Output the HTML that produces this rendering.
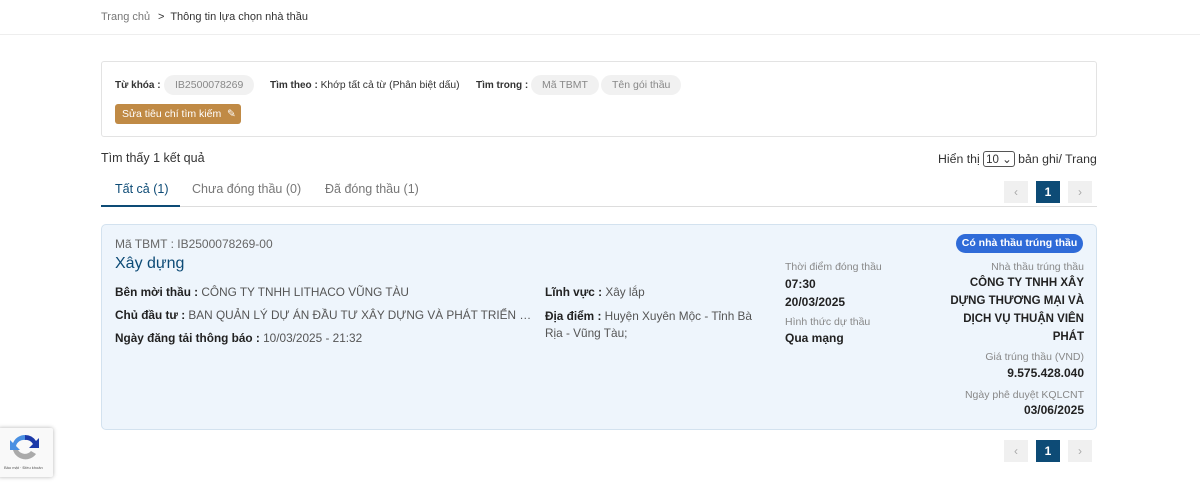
<!DOCTYPE html>
<html><head><meta charset="utf-8"><style>
*{box-sizing:border-box;margin:0;padding:0}
body{width:1200px;height:487px;background:#fff;font-family:"Liberation Sans",sans-serif;color:#222;position:relative;overflow:hidden}
.a{position:absolute;white-space:nowrap}
.bc{top:11px;font-size:11px;color:#777}
.hr{position:absolute;left:0;top:34px;width:1200px;height:1px;background:#eee}
.box{position:absolute;left:101px;top:61px;width:996px;height:76px;border:1px solid #e3e3e3;border-radius:3px}
.lab{font-size:10px;font-weight:bold;color:#333}
.pill{position:absolute;top:75px;height:20px;border-radius:10px;background:#f1f1f1;color:#888;font-size:10.5px;line-height:20px;padding:0 11px}
.btn{position:absolute;left:115px;top:104px;width:126px;height:20px;background:#c08a45;border-radius:3px;color:#fff;font-size:10.5px;line-height:20px;padding-left:7px}
.pg{position:absolute;width:24px;height:22px;background:#f0f0f0;color:#aaa;font-size:12px;text-align:center;line-height:22px}
.pg.on{background:#0d4b76;color:#fff;font-weight:bold}
.card{position:absolute;left:101px;top:224px;width:996px;height:206px;background:#eef5fc;border:1px solid #d3e2ef;border-radius:5px}
.f{font-size:11.8px;color:#555}
.f b{color:#222}
.g{font-size:10.5px;color:#888}
.v{font-size:12px;font-weight:bold;color:#222}
.r{right:116px;text-align:right}
</style></head><body>
<div class="a bc" style="left:101px">Trang chủ</div>
<div class="a bc" style="left:158px;color:#333">&gt;&nbsp; Thông tin lựa chọn nhà thầu</div>
<div class="hr"></div>
<div class="box"></div>
<div class="a lab" style="left:115px;top:80px">Từ khóa :</div>
<div class="pill" style="left:164px">IB2500078269</div>
<div class="a lab" style="left:270px;top:80px">Tìm theo : <span style="font-weight:normal;color:#333;font-size:10.3px">Khớp tất cả từ (Phân biệt dấu)</span></div>
<div class="a lab" style="left:476px;top:80px">Tìm trong :</div>
<div class="pill" style="left:531px">Mã TBMT</div>
<div class="pill" style="left:601px">Tên gói thầu</div>
<div class="btn">Sửa tiêu chí tìm kiếm &nbsp;✎</div>
<div class="a" style="left:101px;top:151px;font-size:12.5px;color:#333">Tìm thấy 1 kết quả</div>
<div class="a" style="left:938px;top:151px;font-size:12.3px;color:#333">Hiển thị <span style="display:inline-block;border:1px solid #555;border-radius:3px;padding:0 2px;font-size:11.5px">10 ⌄</span> bản ghi/ Trang</div>
<div class="a" style="left:115px;top:182px;font-size:12.5px;color:#0d4b76">Tất cả (1)</div>
<div class="a" style="left:192px;top:182px;font-size:12.5px;color:#777">Chưa đóng thầu (0)</div>
<div class="a" style="left:325px;top:182px;font-size:12.5px;color:#777">Đã đóng thầu (1)</div>
<div style="position:absolute;left:101px;top:206px;width:996px;height:1px;background:#ddd"></div>
<div style="position:absolute;left:101px;top:205px;width:79px;height:2px;background:#0d4b76"></div>
<div class="pg" style="left:1004px;top:181px">‹</div><div class="pg on" style="left:1036px;top:181px">1</div><div class="pg" style="left:1068px;top:181px">›</div>
<div class="card"></div>
<div class="a" style="left:115px;top:237px;font-size:12px;color:#666">Mã TBMT : IB2500078269-00</div>
<div class="a" style="left:115px;top:255px;font-size:16px;color:#0d4b76">Xây dựng</div>
<div class="a f" style="left:115px;top:285px"><b>Bên mời thầu :</b> CÔNG TY TNHH LITHACO VŨNG TÀU</div>
<div class="a f" style="left:115px;top:308px;width:424px;overflow:hidden;text-overflow:ellipsis"><b>Chủ đầu tư :</b> BAN QUẢN LÝ DỰ ÁN ĐẦU TƯ XÂY DỰNG VÀ PHÁT TRIỂN QUỸ ĐẤT</div>
<div class="a f" style="left:115px;top:331px"><b>Ngày đăng tải thông báo :</b> 10/03/2025 - 21:32</div>
<div class="a f" style="left:545px;top:285px"><b>Lĩnh vực :</b> Xây lắp</div>
<div class="a f" style="left:545px;top:308px;line-height:17px"><b>Địa điểm :</b> Huyện Xuyên Mộc - Tỉnh Bà<br>Rịa - Vũng Tàu;</div>
<div class="a g" style="left:785px;top:261px">Thời điểm đóng thầu</div>
<div class="a v" style="left:785px;top:275px;line-height:18px">07:30<br>20/03/2025</div>
<div class="a g" style="left:785px;top:316px">Hình thức dự thầu</div>
<div class="a v" style="left:785px;top:331px">Qua mạng</div>
<div class="a" style="left:956px;top:234px;width:127px;height:19px;border-radius:10px;background:#2f6bd8;color:#fff;font-size:10.5px;font-weight:bold;text-align:center;line-height:19px">Có nhà thầu trúng thầu</div>
<div class="a g r" style="top:261px">Nhà thầu trúng thầu</div>
<div class="a v r" style="top:274px;line-height:18px;font-size:11.5px">CÔNG TY TNHH XÂY<br>DỰNG THƯƠNG MẠI VÀ<br>DỊCH VỤ THUẬN VIÊN<br>PHÁT</div>
<div class="a g r" style="top:351px">Giá trúng thầu (VND)</div>
<div class="a v r" style="top:366px">9.575.428.040</div>
<div class="a g r" style="top:389px">Ngày phê duyệt KQLCNT</div>
<div class="a v r" style="top:403px">03/06/2025</div>
<div class="pg" style="left:1004px;top:440px">‹</div><div class="pg on" style="left:1036px;top:440px">1</div><div class="pg" style="left:1068px;top:440px">›</div>
<div style="position:absolute;left:-2px;top:428px;width:55px;height:49px;background:#f9f9f9;box-shadow:0 0 4px rgba(0,0,0,.3);border-radius:2px">
<svg width="34" height="34" viewBox="0 0 34 34" style="position:absolute;left:10px;top:3px">
<path d="M17 4a13 13 0 0 1 11 6l3-3v10h-10l4-4a8 8 0 0 0-8-4z" fill="#1c3aa9"/>
<path d="M17 4a13 13 0 0 0-12 8l-3-3v10h10l-4-4a8 8 0 0 1 9-6z" fill="#4a90e2"/>
<path d="M5 19a13 13 0 0 0 23 4l-5-3a8 8 0 0 1-13-1z" fill="#aaa"/>
</svg>
<div style="position:absolute;left:6px;top:37px;font-size:4px;color:#555">Bảo mật · Điều khoản</div>
</div>
</body></html>
